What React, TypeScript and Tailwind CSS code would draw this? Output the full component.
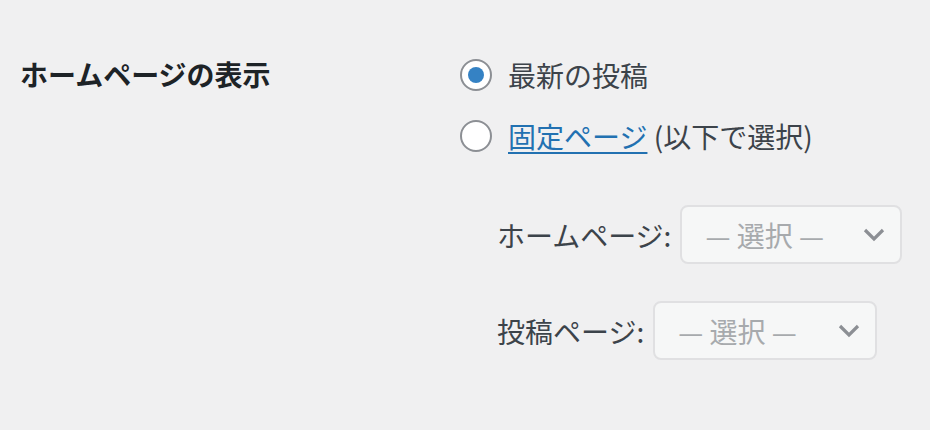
import React from 'react'

const font = { fontFamily: '"Noto Sans CJK JP", "Noto Sans", sans-serif' }

function Radio({ checked }: { checked?: boolean }) {
  return (
    <span className="flex h-8 w-8 shrink-0 items-center justify-center rounded-full border-2 border-[#8c8f94] bg-white">
      {checked && <span className="h-4 w-4 rounded-full bg-[#3582c4]" />}
    </span>
  )
}

function Select({ width }: { width: string }) {
  return (
    <div
      className={`flex h-[59px] ${width} shrink-0 items-center justify-between rounded-lg border-2 border-[#e0e0e2] bg-[#f6f7f7] pl-[23px] pr-[15px]`}
    >
      <span className="text-[28px] leading-none text-[#a7aaad]">— 選択 —</span>
      <svg width="22" height="14" viewBox="0 0 22 14" fill="none" className="text-[#8c8f94]">
        <path d="M2 2l9 9 9-9" stroke="currentColor" strokeWidth="3.2" />
      </svg>
    </div>
  )
}

export default function App() {
  return (
    <div className="h-[430px] w-[930px] bg-[#f0f0f1] pt-[55px]" style={font}>
      <div className="flex">
        <div className="w-[460px] pl-5">
          <div className="h-10 text-[28px] font-semibold leading-[38px] text-[#1d2327]">ホームページの表示</div>
        </div>

        <div className="flex flex-col text-[28px] text-[#3c434a]">
          <label className="flex h-10 items-center gap-4">
            <Radio checked />
            <span className="leading-[38px]">最新の投稿</span>
          </label>

          <label className="mt-[21px] flex h-10 items-center gap-4">
            <Radio />
            <span className="leading-[36px]">
              <span className="text-[#2271b1] underline decoration-2 underline-offset-[4px]">固定ページ</span> (以下で選択)
            </span>
          </label>

          <div className="mt-[49px] flex flex-col gap-[37px] pl-[37px]">
            <div className="flex items-center gap-[9px]">
              <span className="leading-none">ホームページ:</span>
              <Select width="w-[222px]" />
            </div>
            <div className="flex items-center gap-[9px]">
              <span className="leading-none">投稿ページ:</span>
              <Select width="w-[224px]" />
            </div>
          </div>
        </div>
      </div>
    </div>
  )
}
